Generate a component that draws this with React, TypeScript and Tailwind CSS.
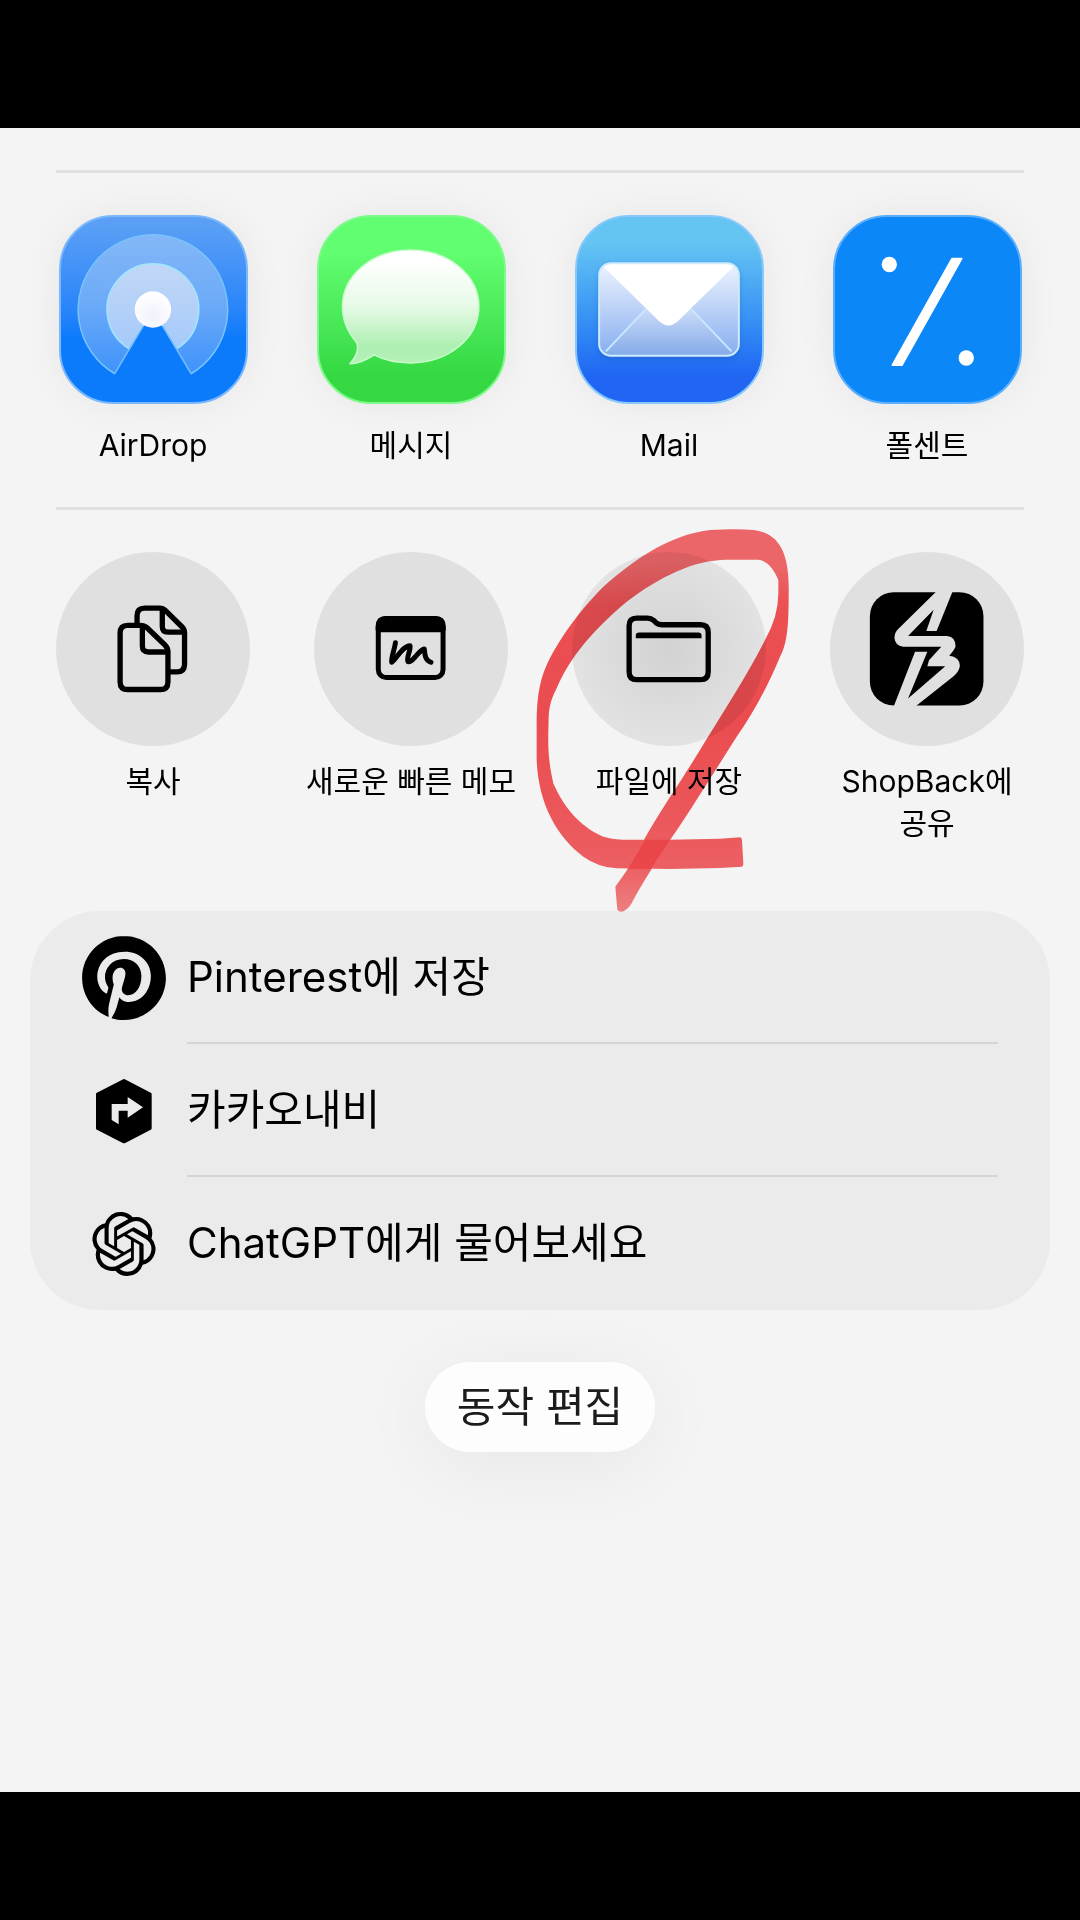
import type { ReactNode } from "react";
import { SiOpenai, SiPinterest } from "react-icons/si";

function AirDropIcon() {
  return (
    <svg viewBox="1 0 188 188" className="size-full" aria-hidden="true">
      <defs>
        <linearGradient id="airOuter" x1="0" y1="0" x2="0" y2="1">
          <stop offset="0" stopColor="#84b7f7" />
          <stop offset="0.5" stopColor="#6caaf8" />
          <stop offset="1" stopColor="#3e93fb" />
        </linearGradient>
        <linearGradient id="airMid" x1="0" y1="0" x2="0" y2="1">
          <stop offset="0" stopColor="#c2d7f6" />
          <stop offset="1" stopColor="#a5cafa" />
        </linearGradient>
        <radialGradient id="airDot" cx="0.5" cy="0.65" r="0.6">
          <stop offset="0" stopColor="#f1f1fd" />
          <stop offset="1" stopColor="#ffffff" />
        </radialGradient>
      </defs>
      <path d="M55.6 159.3A76 76 0 1 1 133.2 159.3L94.4 94Z" fill="url(#airOuter)" stroke="#79c4fc" strokeWidth="1.5" strokeLinejoin="round" />
      <path d="M70.6 134A46.5 46.5 0 1 1 118.2 134L94.4 94Z" fill="url(#airMid)" stroke="#a3e3fe" strokeWidth="1.8" />
      <path d="M55.6 160.5L94.4 95L133.2 160.5Z" fill="#0b7bfb" />
      <path d="M56 158.500L84.500 111M132.800 158.500L104.300 111" stroke="#6fb8fd" strokeWidth="1.500" />
      <circle cx="94.4" cy="94" r="18.5" fill="url(#airDot)" />
    </svg>
  );
}

function MessagesIcon() {
  return (
    <svg viewBox="1 0 188 188" className="size-full" aria-hidden="true">
      <defs>
        <linearGradient id="bubble" x1="0" y1="0" x2="0" y2="1">
          <stop offset="0.1" stopColor="#ffffff" />
          <stop offset="0.5" stopColor="#e6fae6" />
          <stop offset="0.85" stopColor="#aeefb2" />
          <stop offset="1" stopColor="#b4f2b8" />
        </linearGradient>
      </defs>
      <path
        d="M94 33.500C132.500 33.500 163.500 59 163.500 91S132.500 148.300 94 148.300C80 148.300 67 145.500 57 140.200C49 145.500 40 149.500 32.500 149C37 144 42 136 39.500 128C30 117 24.800 104 24.800 91C24.800 59 55.500 33.500 94 33.500Z"
        fill="url(#bubble)"
        stroke="#c9fccb"
        strokeWidth="1.500"
      />
    </svg>
  );
}

function MailIcon() {
  return (
    <svg viewBox="1 1 188 188" className="size-full" aria-hidden="true">
      <defs>
        <linearGradient id="envSide" x1="0" y1="0" x2="0" y2="1">
          <stop offset="0" stopColor="#eef3fe" />
          <stop offset="1" stopColor="#86aef0" />
        </linearGradient>
        <linearGradient id="envFront" x1="0" y1="0" x2="0" y2="1">
          <stop offset="0" stopColor="#d6e2fb" />
          <stop offset="1" stopColor="#84abe9" />
        </linearGradient>
        <filter id="envShadow" x="-20%" y="-20%" width="140%" height="150%">
          <feDropShadow dx="0" dy="3" stdDeviation="3" floodColor="#123f9c" floodOpacity="0.35" />
        </filter>
      </defs>
      <rect x="23.500" y="48" width="142" height="94" rx="12" fill="url(#envSide)" filter="url(#envShadow)" />
      <path d="M30 137.500L78 88H110L158.500 137.500Q156 141.500 151 141.500H37Q32 141.500 30 137.500Z" fill="url(#envFront)" />
      <path d="M30.400 137.600L71 94.500M158 137.600L117 94.500" stroke="#c9e6fe" strokeWidth="2" />
      <path d="M28 51.500Q31 48 36 48H152Q157 48 160 51.500L103 107.500Q94 115 85 107.500Z" fill="#ffffff" />
      <rect x="23.500" y="48" width="142" height="94" rx="12" fill="none" stroke="#cdebff" strokeWidth="2" />
    </svg>
  );
}

function PolcentIcon() {
  return (
    <svg viewBox="1 0 188 188" className="size-full" aria-hidden="true" fill="#ffffff">
      <circle cx="56.200" cy="48.300" r="7.800" />
      <circle cx="134.400" cy="143.300" r="7.800" />
      <path d="M120 42.500H129.500L69 150.500H59.500Z" stroke="#ffffff" strokeWidth="2" strokeLinejoin="round" />
    </svg>
  );
}

function CopyIcon() {
  return (
    <svg viewBox="48 66 584 584" className="size-full" aria-hidden="true" fill="none" stroke="#000" strokeWidth="16" strokeLinejoin="round">
      <path d="M292 284V258Q292 235 315 235H360Q370 235 377 242L427 291Q435 299 435 309V404Q435 427 412 427H390" />
      <path d="M368 238V290Q368 307 385 307H433" />
      <path d="M264 287H302Q314 287 322 294L376 346Q385 355 385 366V457Q385 480 362 480H264Q241 480 241 457V310Q241 287 264 287Z" />
      <path d="M308 290V349Q308 367 326 367H383" />
    </svg>
  );
}

function QuickNoteIcon() {
  return (
    <svg viewBox="822 66 584 584" className="size-full" aria-hidden="true" fill="none" stroke="#000" strokeWidth="15" strokeLinejoin="round" strokeLinecap="round">
      <rect x="1015.500" y="266" width="195" height="178" rx="24" />
      <path d="M1015 300V290Q1015 266 1039 266H1187Q1211 266 1211 290V300Z" fill="#000" />
      <path d="M1067 339C1065 358 1054 382 1056 398C1070 388 1088 349 1111 348C1114 362 1099 384 1105 396C1119 401 1136 362 1154 358C1156 372 1154 390 1174 398" />
    </svg>
  );
}

function FolderIcon() {
  return (
    <svg viewBox="155 126 584 584" className="size-full" aria-hidden="true">
      <path
        d="M327 348Q327 325 350 325H382Q393 325 401 332L407 338Q415 345 427 345H542Q565 345 565 368V487Q565 510 542 510H350Q327 510 327 487Z"
        fill="none"
        stroke="#000"
        strokeWidth="16"
      />
      <path d="M347 386V378Q347 368 357 368H535Q545 368 545 378V386Z" />
    </svg>
  );
}

function ShopBackIcon() {
  return (
    <svg viewBox="90 66 584 584" className="size-full" aria-hidden="true">
      <rect x="210" y="187" width="342" height="341" rx="72" />
      <path
        d="M410 185H459L411 304H380L402 240L325 319H443Q468 322 468 350Q466 360 449 378Q480 382 481 408Q480 425 462 440L348 530H282L346 366H383L325 507L437 410H383L388 392L425 351H310Q286 348 284 325Q284 308 296 297Z"
        fill="#e0e0e0"
      />
    </svg>
  );
}

function KakaoNaviIcon() {
  return (
    <svg viewBox="46 52 172 198" className="h-[66px] w-[58px]" aria-hidden="true">
      <path d="M132 60L210 101V203L132 243L53 203V101Z" stroke="#000" strokeWidth="10" strokeLinejoin="round" />
      <path d="M95 130H143V109L189 140L143 171V150H116V191L95 178Z" fill="#ebebeb" />
    </svg>
  );
}

function MarkerCircle() {
  return (
    <svg
      viewBox="-3 0 900 1260"
      className="pointer-events-none absolute -top-[42px] left-1/2 z-10 h-[420px] w-[300px] -translate-x-1/2 mix-blend-multiply"
      aria-hidden="true"
    >
      <defs>
        <linearGradient id="marker" gradientUnits="userSpaceOnUse" x1="0" y1="60" x2="0" y2="1205">
          <stop offset="0" stopColor="#f43236" stopOpacity="0.72" />
          <stop offset="0.09" stopColor="#f43236" stopOpacity="0.72" />
          <stop offset="0.2" stopColor="#f43236" stopOpacity="0.84" />
          <stop offset="0.5" stopColor="#f43236" stopOpacity="0.86" />
          <stop offset="0.75" stopColor="#f43236" stopOpacity="0.8" />
          <stop offset="0.88" stopColor="#f43236" stopOpacity="0.76" />
          <stop offset="1" stopColor="#f43236" stopOpacity="0.6" />
        </linearGradient>
      </defs>
      <path
        d="M660 982L600 986L450 989H320C290 989 270 985 250 980C175 950 125 880 100 820C82 740 84 700 86 620C88 580 98 560 110 535C150 440 220 360 320 275C420 200 520 150 620 149H715C745 152 765 185 775 210V250Q775 320 735 390C680 500 600 620 540 720C470 835 400 930 345 1040Q320 1085 286 1130L292 1200Q312 1216 335 1180C360 1130 400 1070 440 1005C500 920 580 790 650 680C700 610 745 525 780 440C804 400 806 330 806 250C808 150 790 70 700 60C660 57 620 58 570 60C440 75 330 160 250 230C170 310 110 400 80 465C55 520 50 580 50 640V750C55 880 110 980 190 1040Q235 1072 290 1075L450 1077L600 1074L665 1070Q671 1068 670 1060L666 990Q665 983 660 982Z"
        fill="url(#marker)"
      />
      <path d="M375 989H450L440 1005Q415 1040 393 1077H324Q352 1030 375 989Z" fill="#f43236" fillOpacity="0.5" />
    </svg>
  );
}

const apps: { label: string; icon: ReactNode; tone: string }[] = [
  { label: "AirDrop", icon: <AirDropIcon />, tone: "from-[#5a9ff5] from-5% to-[#0b7bfb] to-65% border-[#7ab8fb]" },
  { label: "메시지", icon: <MessagesIcon />, tone: "from-[#60fe70] from-20% to-[#35d843] to-85% border-[#7dfa8a]" },
  { label: "Mail", icon: <MailIcon />, tone: "from-[#64c4f2] from-15% to-[#2066f3] to-85% border-[#86c8fb]" },
  { label: "폴센트", icon: <PolcentIcon />, tone: "from-[#0c87f8] to-[#0c87f8] border-[#5aaefb]" },
];

const actions: { label: string; icon: ReactNode; marked?: boolean }[] = [
  { label: "복사", icon: <CopyIcon /> },
  { label: "새로운 빠른 메모", icon: <QuickNoteIcon /> },
  { label: "파일에 저장", icon: <FolderIcon />, marked: true },
  { label: "ShopBack에 공유", icon: <ShopBackIcon /> },
];

const services: { label: string; icon: ReactNode }[] = [
  { label: "Pinterest에 저장", icon: <SiPinterest className="size-[84px]" aria-hidden="true" /> },
  { label: "카카오내비", icon: <KakaoNaviIcon /> },
  { label: "ChatGPT에게 물어보세요", icon: <SiOpenai className="size-[64px]" aria-hidden="true" /> },
];

export default function App() {
  return (
    <div className="flex min-h-screen flex-col bg-black font-['Inter','Noto_Sans_CJK_KR',sans-serif] text-black">
      <div className="h-32" />
      <main className="flex flex-1 flex-col bg-[#f4f4f4] pt-[42px]">
        <hr className="mx-14 h-[3px] border-0 bg-[#e1e1e1]" />
        <section className="grid grid-cols-4 px-6 pt-[42px] pb-[41px]" aria-label="앱">
          {apps.map((app) => (
            <button key={app.label} type="button" className="flex flex-col items-center gap-5">
              <span
                className={`size-[189px] overflow-hidden rounded-[54px] border-2 bg-linear-to-b bg-origin-border shadow-[0_0_40px_rgba(0,0,0,0.06)] ${app.tone}`}
              >
                {app.icon}
              </span>
              <span className="text-[30px] leading-[42px]">{app.label}</span>
            </button>
          ))}
        </section>
        <hr className="mx-14 h-[3px] shrink-0 border-0 bg-[#e1e1e1]" />
        <section className="grid grid-cols-4 px-6 pt-[42px]" aria-label="동작">
          {actions.map((action) => (
            <button key={action.label} type="button" className="relative flex flex-col items-center gap-3.5">
              <span
                className={
                  action.marked
                    ? "size-[194px] rounded-full bg-radial from-[#d2d2d2] to-[#e2e2e2] to-70%"
                    : "size-[194px] rounded-full bg-[#e0e0e0]"
                }
              >
                {action.icon}
              </span>
              <span className="px-5 text-[30px] leading-[42px] break-keep">{action.label}</span>
              {action.marked && <MarkerCircle />}
            </button>
          ))}
        </section>
        <ul className="mx-[30px] mt-[67px] rounded-[70px] bg-[#ebebeb]">
          {services.map((service, i) => (
            <li key={service.label}>
              <button type="button" className="flex w-full items-stretch gap-[21px] px-[52px] text-left">
                <span className="flex w-[84px] items-center justify-center">{service.icon}</span>
                <span
                  className={`flex h-[133px] flex-1 items-center border-b-2 text-[42px] leading-[60px] ${
                    i < services.length - 1 ? "border-[#d5d5d5]" : "border-transparent"
                  }`}
                >
                  {service.label}
                </span>
              </button>
            </li>
          ))}
        </ul>
        <button
          type="button"
          className="mt-[52px] mb-16 self-center rounded-full bg-[#fdfdfd] px-8 py-[15px] text-[42px] leading-[60px] text-[#1c1c1c] shadow-[0_12px_80px_rgba(0,0,0,0.06)]"
        >
          동작 편집
        </button>
      </main>
      <div className="h-32" />
    </div>
  );
}
